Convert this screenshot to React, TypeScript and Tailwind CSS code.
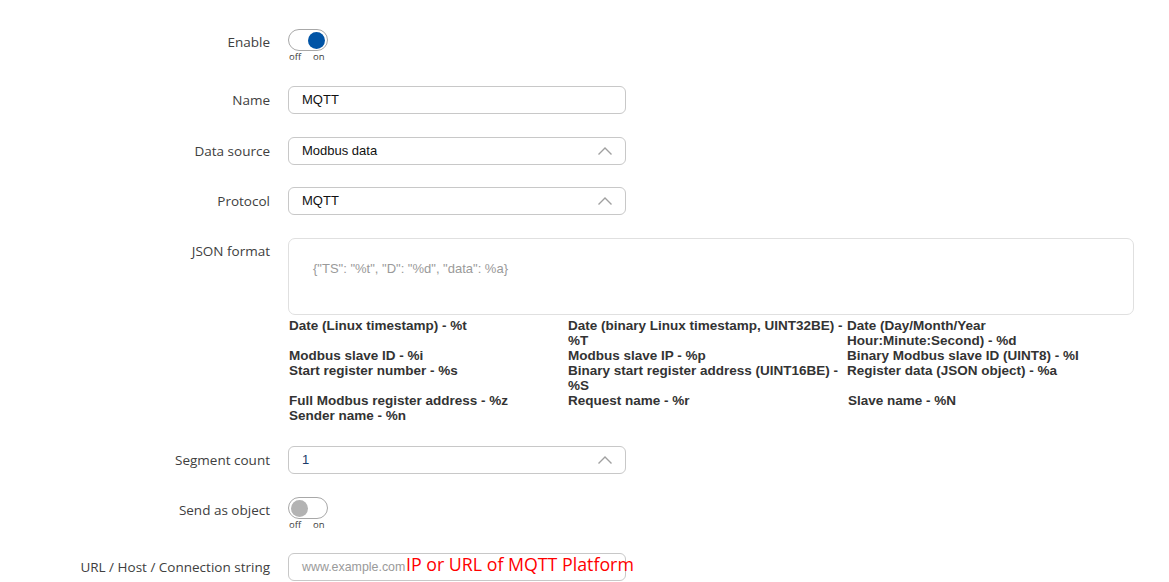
import React from "react";

const labelCls =
  "w-[270px] shrink-0 text-right text-[13.5px] text-[#404040] font-['Open_Sans',sans-serif]";

function Chevron() {
  return (
    <svg width="16" height="10" viewBox="0 0 16 10" className="absolute right-[12px] top-1/2 -translate-y-1/2">
      <polyline points="1.5,8.5 8,2 14.5,8.5" fill="none" stroke="#a0a0a0" strokeWidth="1.4" />
    </svg>
  );
}

function Toggle({ on }: { on: boolean }) {
  return (
    <div className="flex flex-col">
      <div
        className={`w-[40px] h-[22px] rounded-full border border-[#a8a8a8] bg-white flex items-center px-[2px] ${
          on ? "justify-end" : "justify-start"
        }`}
      >
        <div className={`w-[17px] h-[17px] rounded-full ${on ? "bg-[#0054a6]" : "bg-[#b3b3b3]"}`} />
      </div>
      <div className="flex gap-[12px] pl-[1px] text-[9.5px] leading-[12px] text-[#404040] font-['Open_Sans',sans-serif]">
        <span>off</span>
        <span>on</span>
      </div>
    </div>
  );
}

function Input({ value, select, placeholder, children, blue }: { value?: string; select?: boolean; placeholder?: string; children?: React.ReactNode; blue?: boolean }) {
  return (
    <div className="relative w-[338px] h-[28px] rounded-[6px] border border-[#c8c8c8] bg-white flex items-center pl-[13px] font-['Liberation_Sans',Arial,sans-serif] text-[13px]">
      {value !== undefined ? (
        <span className={blue ? "text-[#1a3a6a]" : "text-[#111]"}>{value}</span>
      ) : (
        <span className="text-[#9a9a9a] text-[12.4px]">{placeholder}</span>
      )}
      {select && <Chevron />}
      {children}
    </div>
  );
}

const helps: string[] = [
  "Date (Linux timestamp) - %t",
  "Date (binary Linux timestamp, UINT32BE) - %T",
  "Date (Day/Month/Year Hour:Minute:Second) - %d",
  "Modbus slave ID - %i",
  "Modbus slave IP - %p",
  "Binary Modbus slave ID (UINT8) - %I",
  "Start register number - %s",
  "Binary start register address (UINT16BE) - %S",
  "Register data (JSON object) - %a",
  "Full Modbus register address - %z",
  "Request name - %r",
  "Slave name - %N",
  "Sender name - %n",
];

export default function App() {
  return (
    <div className="w-[1169px] h-[582px] bg-white overflow-hidden pt-[29px]">
      {/* Enable */}
      <div className="flex items-start">
        <div className={`${labelCls} leading-[22px] mt-[2px]`}>Enable</div>
        <div className="ml-[18px]">
          <Toggle on={true} />
        </div>
      </div>

      {/* Name */}
      <div className="flex items-center mt-[23px]">
        <div className={labelCls}>Name</div>
        <div className="ml-[18px]">
          <Input value="MQTT" />
        </div>
      </div>

      {/* Data source */}
      <div className="flex items-center mt-[23px]">
        <div className={labelCls}>Data source</div>
        <div className="ml-[18px]">
          <Input value="Modbus data" select />
        </div>
      </div>

      {/* Protocol */}
      <div className="flex items-center mt-[22px]">
        <div className={labelCls}>Protocol</div>
        <div className="ml-[18px]">
          <Input value="MQTT" select />
        </div>
      </div>

      {/* JSON format */}
      <div className="flex items-start mt-[23px]">
        <div className={`${labelCls} leading-[20px] mt-[3px]`}>JSON format</div>
        <div className="ml-[18px] w-[846px]">
          <div className="h-[77px] rounded-[7px] border border-[#e0e0e0] bg-white pl-[24px] pt-[20px] font-['Liberation_Sans',Arial,sans-serif] text-[13px] text-[#9a9a9a]">
            {'{"TS": "%t", "D": "%d", "data": %a}'}
          </div>
          <div className="grid grid-cols-[279px_279px_279px] mt-[3px] pl-[1px] font-['Liberation_Sans',Arial,sans-serif] font-bold text-[13.5px] leading-[15px] text-[#333]">
            {helps.map((h, i) => (
              <div key={i} className={i === 11 ? "pl-[1px]" : ""}>
                {h}
              </div>
            ))}
          </div>
        </div>
      </div>

      {/* Segment count */}
      <div className="flex items-center mt-[23px]">
        <div className={labelCls}>Segment count</div>
        <div className="ml-[18px]">
          <Input value="1" select blue />
        </div>
      </div>

      {/* Send as object */}
      <div className="flex items-start mt-[23px]">
        <div className={`${labelCls} leading-[22px] mt-[2px]`}>Send as object</div>
        <div className="ml-[18px]">
          <Toggle on={false} />
        </div>
      </div>

      {/* URL */}
      <div className="flex items-center mt-[22px]">
        <div className={labelCls}>URL / Host / Connection string</div>
        <div className="ml-[18px]">
          <Input placeholder="www.example.com">
            <span className="absolute left-[117px] top-[-2px] text-[17.8px] leading-[24px] text-[#ff0000] font-['Open_Sans',sans-serif] whitespace-nowrap">
              IP or URL of MQTT Platform
            </span>
          </Input>
        </div>
      </div>
    </div>
  );
}
